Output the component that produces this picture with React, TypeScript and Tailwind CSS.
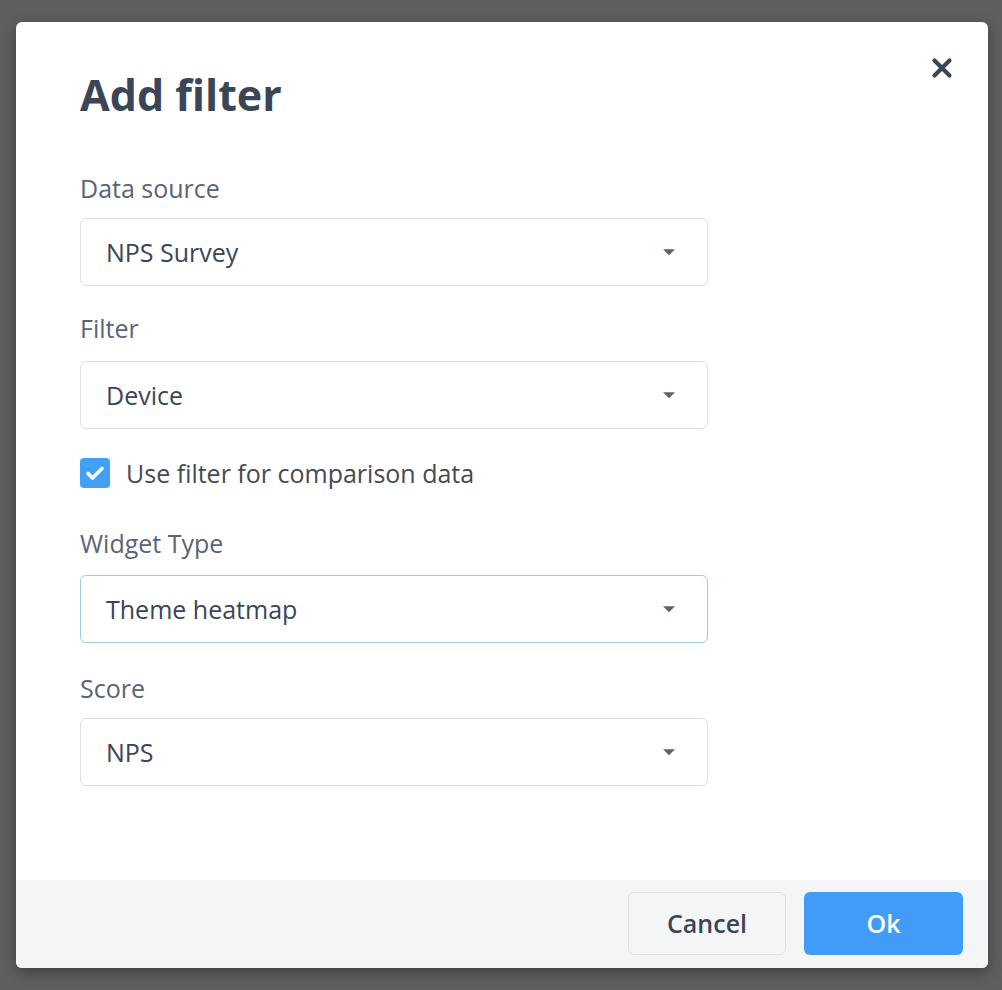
import React, { useState } from 'react';

const font = { fontFamily: '"Open Sans", "Noto Sans", sans-serif' };

interface SelectFieldProps {
  label: string;
  value: string;
  focused?: boolean;
  labelClass: string;
}

const Caret = () => (
  <svg width="14" height="8" viewBox="0 0 14 8" className="shrink-0">
    <path d="M1 1.2 L13 1.2 L7 7.2 Z" fill="#5c6370" />
  </svg>
);

const SelectField: React.FC<SelectFieldProps> = ({ label, value, focused = false, labelClass }) => (
  <div className={labelClass}>
    <div className="text-[25px] leading-[36px] text-[#5a6477]">{label}</div>
    <div
      className={`flex items-center justify-between w-[628px] h-[68px] rounded-[6px] border bg-white pl-[25px] pr-[31px] ${
        focused ? 'border-[#9fcbe0]' : 'border-[#dcdfe3]'
      }`}
    >
      <span className="text-[25px] leading-[36px] text-[#3b4558]">{value}</span>
      <Caret />
    </div>
  </div>
);

export default function App() {
  const [checked, setChecked] = useState(true);

  return (
    <div className="w-full h-[990px] bg-[#5f5f5f] pt-[22px] pl-[16px]" style={font}>
      <div className="relative w-[972px] h-[946px] bg-white rounded-[6px] shadow-[0_4px_14px_rgba(0,0,0,0.35)] flex flex-col overflow-hidden">
        {/* close */}
        <button className="absolute top-[35px] right-[35px] w-[22px] h-[22px] flex items-center justify-center">
          <svg width="22" height="22" viewBox="0 0 22 22">
            <path d="M3.5 3.5 L18.5 18.5 M18.5 3.5 L3.5 18.5" stroke="#3b4558" strokeWidth="4.2" strokeLinecap="round" />
          </svg>
        </button>

        <div className="flex-1 pl-[64px] pt-[47px]">
          <h1 className="text-[43px] leading-[52px] font-bold text-[#3b4558]">Add filter</h1>

          <SelectField label="Data source" value="NPS Survey" labelClass="mt-[49px] [&>div:first-child]:mb-[12px]" />
          <SelectField label="Filter" value="Device" labelClass="mt-[24px] [&>div:first-child]:mb-[15px]" />

          <label className="mt-[29px] flex items-center h-[30px] cursor-pointer">
            <input type="checkbox" className="hidden" checked={checked} onChange={() => setChecked(!checked)} />
            <span
              className={`w-[30px] h-[30px] rounded-[4px] flex items-center justify-center ${
                checked ? 'bg-[#42a0f6]' : 'bg-white border border-[#dcdfe3]'
              }`}
            >
              {checked && (
                <svg width="20" height="16" viewBox="0 0 20 16">
                  <path d="M3 8.5 L7.5 13 L17 3.5" fill="none" stroke="white" strokeWidth="3.6" strokeLinecap="round" strokeLinejoin="round" />
                </svg>
              )}
            </span>
            <span className="ml-[16px] text-[25px] leading-[36px] text-[#474a50]">Use filter for comparison data</span>
          </label>

          <SelectField label="Widget Type" value="Theme heatmap" focused labelClass="mt-[37px] [&>div:first-child]:mb-[14px]" />
          <SelectField label="Score" value="NPS" labelClass="mt-[27px] [&>div:first-child]:mb-[12px]" />
        </div>

        {/* footer */}
        <div className="h-[88px] bg-[#f4f5f7] flex items-start justify-end gap-[18px] pt-[12px] pr-[25px]">
          <button className="w-[158px] h-[63px] rounded-[6px] border border-[#dcdfe3] bg-[#f4f5f7] text-[25px] font-semibold text-[#3b4558]">
            Cancel
          </button>
          <button className="w-[159px] h-[63px] rounded-[6px] bg-[#409cf6] text-[25px] font-semibold text-white">
            Ok
          </button>
        </div>
      </div>
    </div>
  );
}
